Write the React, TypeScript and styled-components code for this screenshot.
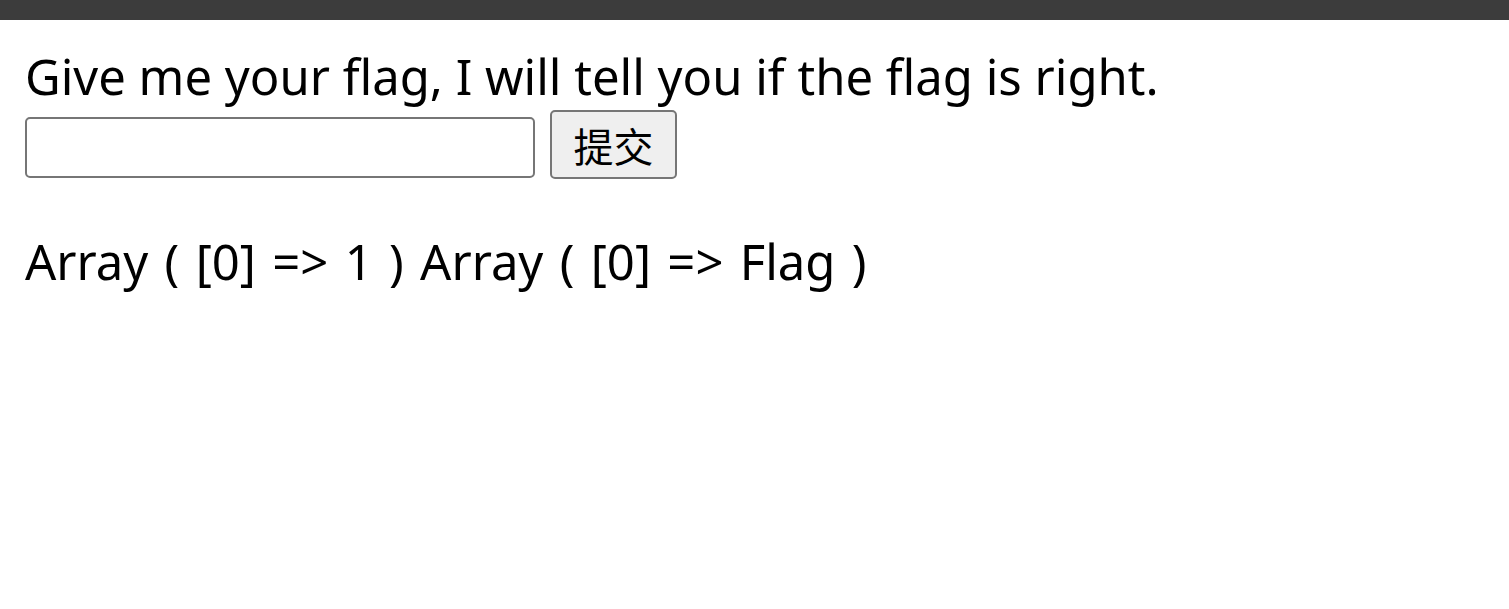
import React from "react";
import styled, { createGlobalStyle } from "styled-components";

const Global = createGlobalStyle`
  html, body { margin: 0; padding: 0; background: #ffffff; }
  body { font-family: "Noto Sans", "Noto Sans CJK SC", sans-serif; color: #000; }
`;

const TopBar = styled.div`
  height: 20px;
  background: #3c3c3c;
`;

const Page = styled.main`
  padding: 0 25px;
`;

const Prompt = styled.div`
  font-size: 49px;
  line-height: 56px;
  margin-top: 28px;
  white-space: nowrap;
`;

const Form = styled.form`
  display: flex;
  align-items: flex-start;
  gap: 15px;
  margin: 6px 0 0 0;
`;

const FlagInput = styled.input`
  box-sizing: border-box;
  width: 510px;
  height: 61px;
  margin: 7px 0 0 0;
  border: 2px solid #767676;
  border-radius: 5px;
  background: #fff;
  font-size: 40px;
  padding: 0 6px;
`;

const Submit = styled.button`
  box-sizing: border-box;
  width: 127px;
  height: 69px;
  border: 2px solid #767676;
  border-radius: 5px;
  background: #efefef;
  font-family: "Noto Sans CJK SC", sans-serif;
  font-size: 40px;
  line-height: 1;
  color: #000;
  padding: 0;
  margin: 0;
`;

const Result = styled.div`
  font-size: 49px;
  line-height: 66px;
  margin-top: 49px;
  word-spacing: 3.6px;
  white-space: nowrap;
`;

export default function App() {
  return (
    <>
      <Global />
      <TopBar />
      <Page>
        <Prompt>Give me your flag, I will tell you if the flag is right.</Prompt>
        <Form onSubmit={(e) => e.preventDefault()}>
          <FlagInput type="text" />
          <Submit type="submit">提交</Submit>
        </Form>
        <Result>Array ( [0] =&gt; 1 ) Array ( [0] =&gt; Flag )</Result>
      </Page>
    </>
  );
}
